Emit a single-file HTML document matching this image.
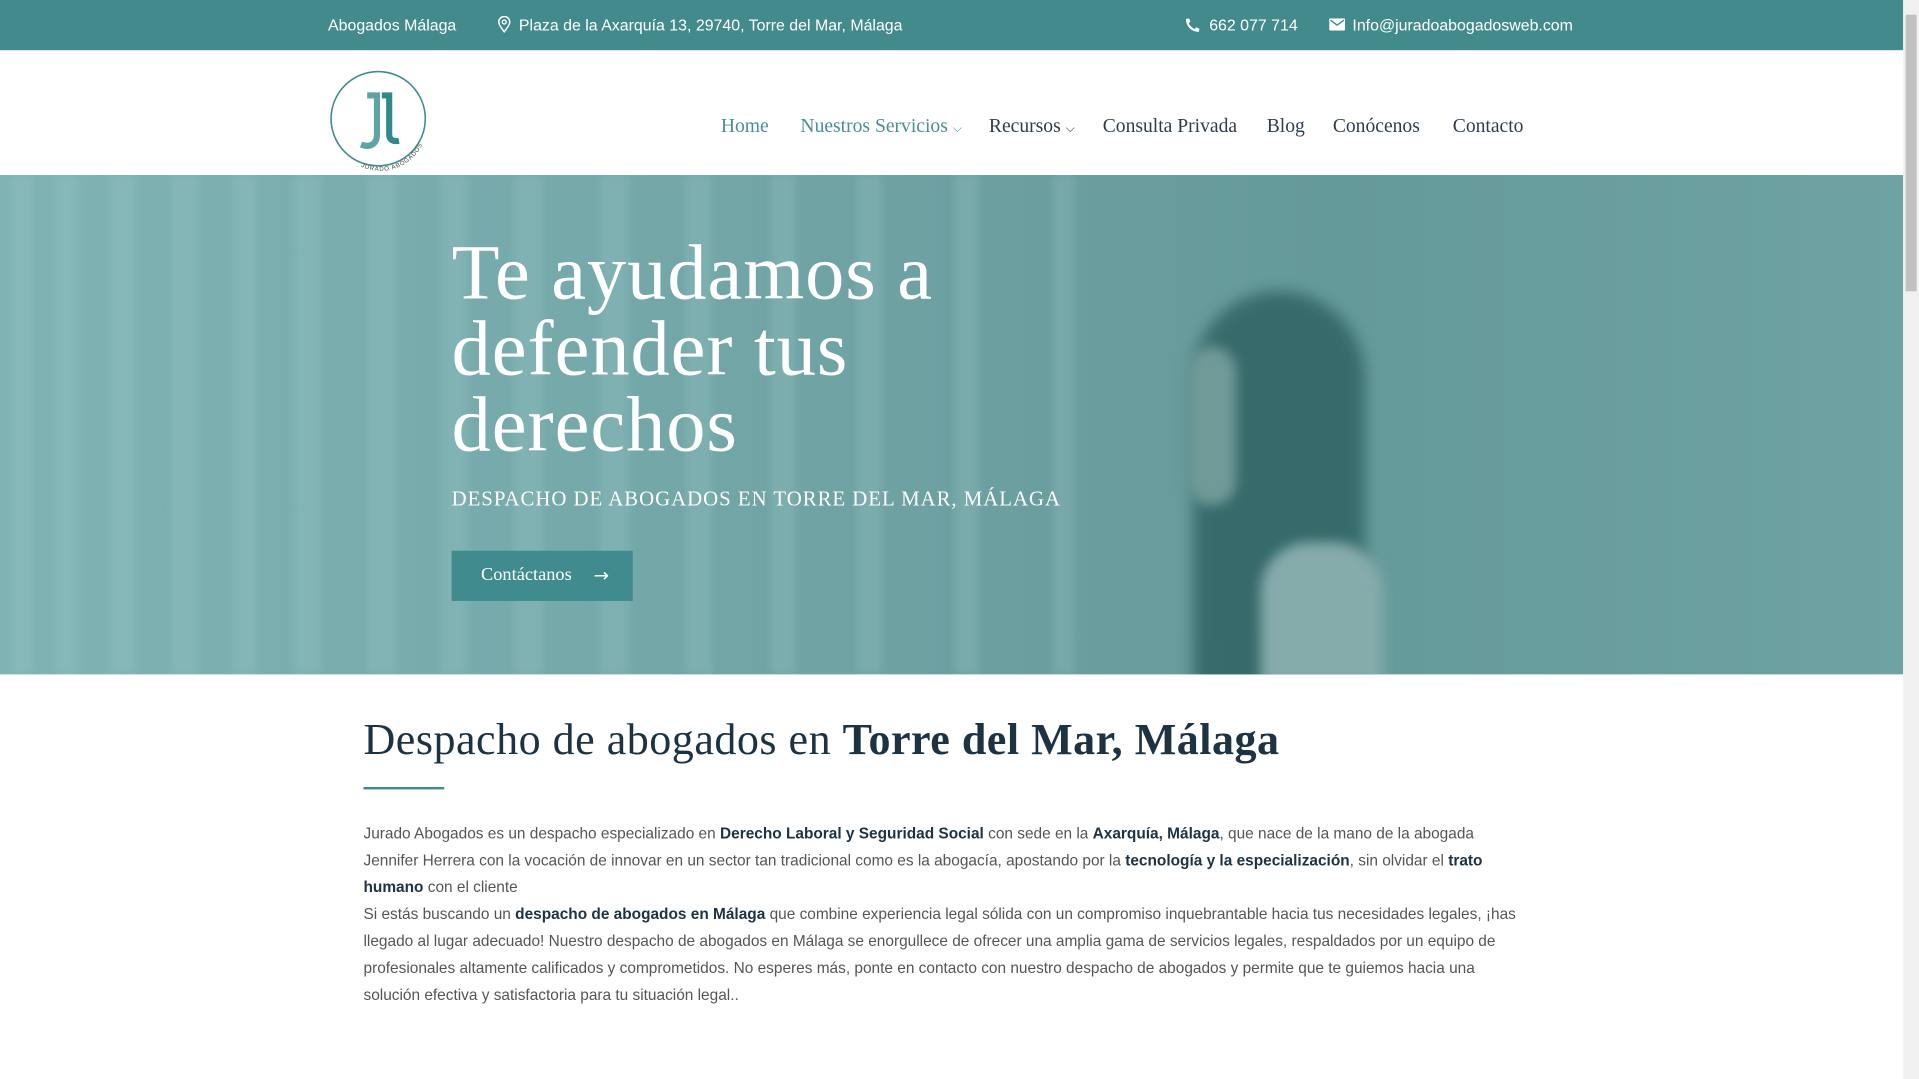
<!DOCTYPE html>
<html><head><meta charset="utf-8"><style>
html,body{margin:0;padding:0;width:1919px;height:1079px;overflow:hidden;background:#fff}
#w{position:absolute;left:0;top:0;width:1568px;height:882px;transform:scale(1.2239);transform-origin:0 0;font-family:"Liberation Sans",sans-serif}
.top{position:absolute;left:0;top:0;width:1555px;height:41px;background:#438a8c;color:#fff;font-size:13px}
.top span{position:absolute;top:13px}
.nav{position:absolute;top:95px;font-family:"Liberation Serif",serif;font-size:16px;color:#2f3d4a}
.hero{position:absolute;left:0;top:143px;width:1555px;height:408px;overflow:hidden;
background:linear-gradient(90deg,#7fb3b4 0%,#75a9aa 30%,#6b9e9f 55%,#659a9a 70%,#6fa3a3 100%)}
.bl{position:absolute;top:0;height:408px;background:rgba(170,210,210,.22);filter:blur(3px)}
h1{position:absolute;left:369px;top:192px;margin:0;font-family:"Liberation Serif",serif;font-weight:normal;color:#fff;font-size:64px;line-height:62px;letter-spacing:0.8px}
.sub{position:absolute;left:369px;top:398px;color:#fff;font-family:"Liberation Serif",serif;font-size:17px;letter-spacing:0.8px}
.btn{position:absolute;left:369px;top:450px;width:148px;height:41px;background:#3f8b8d;color:#fff;font-family:"Liberation Serif",serif;font-size:15px;line-height:41px}
h2{position:absolute;left:297px;top:583px;margin:0;font-family:"Liberation Serif",serif;font-weight:normal;font-size:36px;color:#1d3343;letter-spacing:0.4px}
.p{position:absolute;left:297px;top:670px;width:945px;font-size:12.6px;line-height:22px;color:#555}
.p b{color:#1d3343}
.sb{position:absolute;left:1555px;top:0;width:13px;height:882px;background:#f1f1f1}
.th{position:absolute;left:1557px;top:12px;width:9px;height:226px;background:#c1c1c1}
</style></head><body><div id="w">
<div class="top">
<span style="left:268px">Abogados Málaga</span>
<svg style="position:absolute;left:406px;top:13px" width="12" height="14" viewBox="0 0 12 14"><path d="M6 13C3 9 1.5 7 1.5 5a4.5 4.5 0 0 1 9 0c0 2-1.5 4-4.5 8z" fill="none" stroke="#fff" stroke-width="1.2"/><circle cx="6" cy="5" r="1.6" fill="none" stroke="#fff" stroke-width="1.1"/></svg>
<span style="left:424px">Plaza de la Axarquía 13, 29740, Torre del Mar, Málaga</span>
<svg style="position:absolute;left:968px;top:14px" width="13" height="13" viewBox="0 0 13 13"><path d="M12 9.5l-2.6-1.2-1.3 1.5C6 8.8 4.2 7 3.2 4.9l1.5-1.3L3.5 1 1 1.5C1 7.5 5.5 12 11.5 12z" fill="#fff"/></svg>
<span style="left:988px">662 077 714</span>
<svg style="position:absolute;left:1086px;top:15px" width="13" height="10" viewBox="0 0 13 10"><rect width="13" height="10" rx="1" fill="#fff"/><path d="M1 1.5l5.5 4 5.5-4" fill="none" stroke="#438a8c" stroke-width="1.2"/></svg>
<span style="left:1105px">Info@juradoabogadosweb.com</span>
</div>
<svg style="position:absolute;left:268px;top:56px" width="84" height="84" viewBox="0 0 84 84">
<circle cx="41" cy="41" r="38.5" fill="none" stroke="#3f8b8d" stroke-width="1.3"/>
<path d="M32 22h8v32c0 8-6 11-13 8" fill="none" stroke="#5ea4a4" stroke-width="5"/>
<path d="M44 22h6v32c0 4 3 6 8 5" fill="none" stroke="#2f8a8c" stroke-width="5"/>
<path id="arc" d="M20 76 A38 38 0 0 0 80 38" fill="none"/>
<text font-size="5" fill="#444" font-family="Liberation Sans" letter-spacing="0.6"><textPath href="#arc" startOffset="8">JURADO ABOGADOS</textPath></text>
</svg>
<div class="nav" style="left:589px;color:#4a8f91">Home</div>
<div class="nav" style="left:654px;color:#4a8f91">Nuestros Servicios <span style="font-size:10px">⌵</span></div>
<div class="nav" style="left:808px">Recursos <span style="font-size:10px">⌵</span></div>
<div class="nav" style="left:901px">Consulta Privada</div>
<div class="nav" style="left:1035px">Blog</div>
<div class="nav" style="left:1089px">Conócenos</div>
<div class="nav" style="left:1187px">Contacto</div>
<div class="hero">
<div class="bl" style="left:10px;width:16px"></div><div class="bl" style="left:45px;width:18px"></div>
<div class="bl" style="left:90px;width:20px"></div><div class="bl" style="left:140px;width:22px"></div>
<div class="bl" style="left:190px;width:20px"></div><div class="bl" style="left:240px;width:22px"></div>
<div class="bl" style="left:300px;width:24px"></div><div class="bl" style="left:360px;width:22px"></div>
<div class="bl" style="left:420px;width:24px"></div><div class="bl" style="left:490px;width:24px"></div>
<div class="bl" style="left:560px;width:22px"></div><div class="bl" style="left:630px;width:20px"></div>
<div class="bl" style="left:700px;width:20px"></div><div class="bl" style="left:780px;width:20px"></div>
<div class="bl" style="left:860px;width:18px"></div>
<div style="position:absolute;left:975px;top:95px;width:140px;height:330px;border-radius:70px 70px 0 0;background:#2c5f60;opacity:.8;filter:blur(6px)"></div>
<div style="position:absolute;left:970px;top:140px;width:40px;height:130px;border-radius:20px;background:#6f9a98;filter:blur(5px)"></div>
<div style="position:absolute;left:1030px;top:300px;width:100px;height:130px;border-radius:40px 40px 0 0;background:#86abab;filter:blur(5px)"></div>
</div>
<h1>Te ayudamos a<br>defender tus<br>derechos</h1>
<div class="sub">DESPACHO DE ABOGADOS EN TORRE DEL MAR, MÁLAGA</div>
<div class="btn"><span style="margin-left:24px">Contáctanos</span><span style="position:absolute;left:116px;font-family:'DejaVu Sans'">→</span></div>
<h2>Despacho de abogados en <span style="font-weight:bold">Torre del Mar, Málaga</span></h2>
<div style="position:absolute;left:297px;top:643px;width:66px;height:2px;background:#3f8b8d"></div>
<div class="p">Jurado Abogados es un despacho especializado en <b>Derecho Laboral y Seguridad Social</b> con sede en la <b>Axarquía, Málaga</b>, que nace de la mano de la abogada Jennifer Herrera con la vocación de innovar en un sector tan tradicional como es la abogacía, apostando por la <b>tecnología y la especialización</b>, sin olvidar el <b>trato humano</b> con el cliente<br>Si estás buscando un <b>despacho de abogados en Málaga</b> que combine experiencia legal sólida con un compromiso inquebrantable hacia tus necesidades legales, ¡has llegado al lugar adecuado! Nuestro despacho de abogados en Málaga se enorgullece de ofrecer una amplia gama de servicios legales, respaldados por un equipo de profesionales altamente calificados y comprometidos. No esperes más, ponte en contacto con nuestro despacho de abogados y permite que te guiemos hacia una solución efectiva y satisfactoria para tu situación legal..</div>
<div class="sb"></div><div class="th"></div>
</div></body></html>
